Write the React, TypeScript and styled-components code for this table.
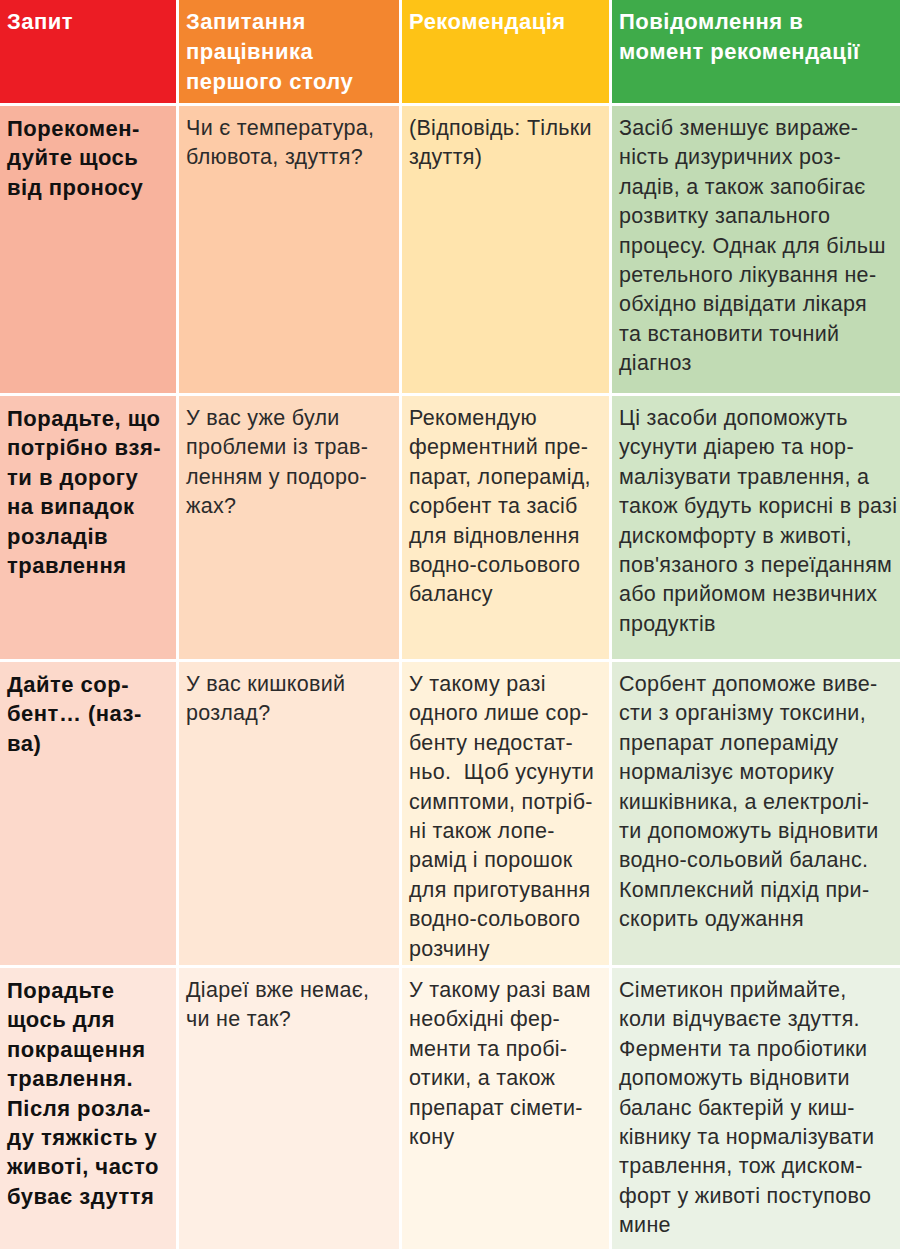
import React from "react";
import styled, { createGlobalStyle } from "styled-components";

const GlobalStyle = createGlobalStyle`
  html, body { margin: 0; padding: 0; background: #ffffff; }
  body { font-family: "Liberation Sans", Arial, sans-serif; }
`;

const Table = styled.div`
  display: grid;
  grid-template-columns: 176px 220px 207px 288px;
  grid-template-rows: 103px 287px 263px 303px 281px;
  column-gap: 3px;
  row-gap: 3px;
  width: 900px;
  height: 1249px;
  background: #ffffff;
`;

const HeadCell = styled.div<{ $bg: string }>`
  background: ${(p) => p.$bg};
  color: #ffffff;
  font-weight: 700;
  font-size: 22px;
  letter-spacing: 0.5px;
  line-height: 30px;
  padding: 7px 4px 0 7px;
  white-space: pre;
  overflow: hidden;
`;

const BodyCell = styled.div<{ $bg: string; $bold?: boolean }>`
  background: ${(p) => p.$bg};
  color: ${(p) => (p.$bold ? "#111111" : "#2b2b2b")};
  font-weight: ${(p) => (p.$bold ? 700 : 400)};
  font-size: ${(p) => (p.$bold ? "22px" : "21.5px")};
  letter-spacing: ${(p) => (p.$bold ? "0.5px" : "0.3px")};
  line-height: 29.4px;
  padding: 8px 2px 0 7px;
  white-space: pre;
  overflow: hidden;
`;

const headers: { text: string; bg: string }[] = [
  { text: "Запит", bg: "#ec1c24" },
  { text: "Запитання\nпрацівника\nпершого столу", bg: "#f3862f" },
  { text: "Рекомендація", bg: "#fec316" },
  { text: "Повідомлення в\nмомент рекомендації", bg: "#3fab4a" },
];

const rowColors: string[][] = [
  ["#f8b39d", "#fdcba7", "#ffe4ad", "#c1dbb4"],
  ["#fac5b3", "#fdd9be", "#ffebc6", "#d1e5c6"],
  ["#fcd9cb", "#fee7d5", "#fff2da", "#e1ecd8"],
  ["#fde6dc", "#feefe4", "#fff6e8", "#eaf2e5"],
];

const rows: string[][] = [
  [
    "Порекомен-\nдуйте щось\nвід проносу",
    "Чи є температура,\nблювота, здуття?",
    "(Відповідь: Тільки\nздуття)",
    "Засіб зменшує вираже-\nність дизуричних роз-\nладів, а також запобігає\nрозвитку запального\nпроцесу. Однак для більш\nретельного лікування не-\nобхідно відвідати лікаря\nта встановити точний\nдіагноз",
  ],
  [
    "Порадьте, що\nпотрібно взя-\nти в дорогу\nна випадок\nрозладів\nтравлення",
    "У вас уже були\nпроблеми із трав-\nленням у подоро-\nжах?",
    "Рекомендую\nферментний пре-\nпарат, лоперамід,\nсорбент та засіб\nдля відновлення\nводно-сольового\nбалансу",
    "Ці засоби допоможуть\nусунути діарею та нор-\nмалізувати травлення, а\nтакож будуть корисні в разі\nдискомфорту в животі,\nпов'язаного з переїданням\nабо прийомом незвичних\nпродуктів",
  ],
  [
    "Дайте сор-\nбент… (наз-\nва)",
    "У вас кишковий\nрозлад?",
    "У такому разі\nодного лише сор-\nбенту недостат-\nньо.  Щоб усунути\nсимптоми, потріб-\nні також лопе-\nрамід і порошок\nдля приготування\nводно-сольового\nрозчину",
    "Сорбент допоможе виве-\nсти з організму токсини,\nпрепарат лопераміду\nнормалізує моторику\nкишківника, а електролі-\nти допоможуть відновити\nводно-сольовий баланс.\nКомплексний підхід при-\nскорить одужання",
  ],
  [
    "Порадьте\nщось для\nпокращення\nтравлення.\nПісля розла-\nду тяжкість у\nживоті, часто\nбуває здуття",
    "Діареї вже немає,\nчи не так?",
    "У такому разі вам\nнеобхідні фер-\nменти та пробі-\nотики, а також\nпрепарат сімети-\nкону",
    "Сіметикон приймайте,\nколи відчуваєте здуття.\nФерменти та пробіотики\nдопоможуть відновити\nбаланс бактерій у киш-\nківнику та нормалізувати\nтравлення, тож диском-\nфорт у животі поступово\nмине",
  ],
];

export default function App() {
  return (
    <>
      <GlobalStyle />
      <Table>
        {headers.map((h) => (
          <HeadCell key={h.text} $bg={h.bg}>
            {h.text}
          </HeadCell>
        ))}
        {rows.map((row, ri) =>
          row.map((cell, ci) => (
            <BodyCell key={`${ri}-${ci}`} $bg={rowColors[ri][ci]} $bold={ci === 0}>
              {cell}
            </BodyCell>
          ))
        )}
      </Table>
    </>
  );
}
